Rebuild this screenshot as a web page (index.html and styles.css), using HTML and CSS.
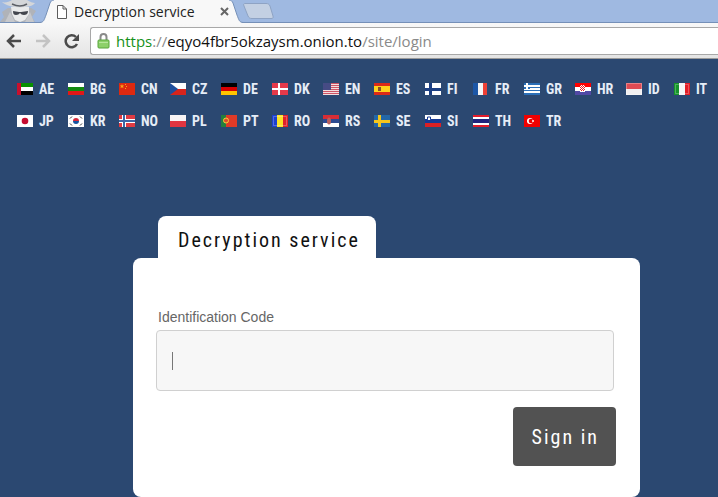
FILE: index.html
```html
<!DOCTYPE html>
<html lang="en">
<head>
    <meta charset="UTF-8">
    <meta name="viewport" content="width=device-width, initial-scale=1.0">
    <title>Decryption service</title>
    <link rel="stylesheet" href="styles.css">
</head>
<body>
    <header class="browser">
        <div class="tabstrip">
            <svg class="incognito" width="40" height="22" viewBox="0 0 40 22" aria-hidden="true">
                <path d="M0 22 L4 17 L2 12 L8 8 H31 L36 11 L32 17 L35 22 Z" fill="#b0b3b9"/>
                <path d="M5 22 L10 12 L15 22 Z M34 22 L30 12 L25 22 Z" fill="#c6c8cc"/>
                <path d="M11 7 H29 V14 L25 20 L20 22 L15 20 L12 14 Z" fill="#e9eaeb"/>
                <path d="M2 2 C5 3 9 2 12 0 H27 C30 2 33 3 35 3 C31 9 9 9 2 2 Z" fill="#d4d6d9"/>
                <path d="M12 4 C16 6 22 7 27 4" fill="none" stroke="#5b5e65" stroke-width="1.500"/>
                <path d="M13 11 L19 12 H21 L28 11 C28 14 26 15 24 15 C22 15 21 14 20 13 C19 14 18 15 16 15 C14 15 13 14 13 11 Z" fill="#43464e"/>
            </svg>
            <div class="tab">
                <svg class="tab-edge" width="14" height="23" viewBox="0 0 14 23" aria-hidden="true">
                    <path d="M0 23 C4 22 4 20 6 15 L10 3 C11 1 12 0 14 0 V23 Z" fill="#f8f8f8"/>
                    <path d="M0 22.500 C4 22 4 20 6 15 L10 3 C11 1 12 0 14 0" fill="none" stroke="#7590b8"/>
                </svg>
                <div class="tab-body">
                    <svg width="12" height="16" viewBox="0 0 12 16" aria-hidden="true">
                        <path d="M1.500 1.500 H7 L10.500 5 V14.500 H1.500 Z M7 1.500 V5 H10.500" fill="#fff" stroke="#5c5c5c"/>
                    </svg>
                    <span class="tab-title">Decryption service</span>
                    <button class="tab-close" type="button" aria-label="Close tab">
                        <svg width="9" height="9" viewBox="0 0 9 9"><path d="M1 1 L8 8 M8 1 L1 8" stroke="#666" stroke-width="2"/></svg>
                    </button>
                </div>
                <svg class="tab-edge" width="14" height="23" viewBox="0 0 14 23" aria-hidden="true">
                    <path d="M0 0 C2 0 3 1 4 3 L8 15 C10 20 10 22 14 23 H0 Z" fill="#f8f8f8"/>
                    <path d="M0 0 C2 0 3 1 4 3 L8 15 C10 20 10 22 14 22.500" fill="none" stroke="#7590b8"/>
                </svg>
            </div>
            <button class="new-tab" type="button" aria-label="New tab">
                <svg width="31" height="16" viewBox="0 0 31 16"><path d="M2 .5 H23 C25 .5 26 1 27 3 L30 13 C30.500 15 30 15.500 28 15.500 H9 C7 15.500 6 15 5 13 L1 3 C0 1 1 .5 2 .5 Z" fill="#c3d0e3" stroke="#8ea3c4"/></svg>
            </button>
        </div>
        <div class="toolbar">
            <div class="nav">
                <button type="button" aria-label="Back">
                    <svg width="16" height="14" viewBox="0 0 16 14"><path d="M8 1 L2 7 L8 13 M2 7 H15" fill="none" stroke="#4b4b4b" stroke-width="2.500"/></svg>
                </button>
                <button type="button" aria-label="Forward">
                    <svg width="16" height="14" viewBox="0 0 16 14"><path d="M8 1 L14 7 L8 13 M14 7 H1" fill="none" stroke="#c3c3c3" stroke-width="2.500"/></svg>
                </button>
                <button type="button" aria-label="Reload">
                    <svg width="16" height="16" viewBox="0 0 16 16"><path d="M13 11 A6 6 0 1 1 12 4" fill="none" stroke="#4b4b4b" stroke-width="2.500"/><path d="M15 1 V8 H8 Z" fill="#4b4b4b"/></svg>
                </button>
            </div>
            <div class="omnibox">
                <svg width="13" height="16" viewBox="0 0 13 16" aria-hidden="true">
                    <path d="M3.500 8 V4 C3.500 0 9.500 0 9.500 4 V8" fill="none" stroke="#8a8a8a" stroke-width="2"/>
                    <rect x="1" y="7" width="11" height="8" rx="1" fill="#8dd06a" stroke="#58a63c"/>
                    <path d="M2 9.500 H11" stroke="#b6e69c"/>
                </svg>
                <div class="url"><span class="url-scheme">https</span><span class="url-dim">://</span>eqyo4fbr5okzaysm.onion.to<span class="url-dim">/site/login</span></div>
            </div>
        </div>
    </header>

    <nav class="languages" aria-label="Language">
        <a href="#"><svg class="flag" viewBox="0 0 16 12"><path fill="#fff" d="M0 0h16v12H0z"/><path fill="#089000" d="M0 0h16v4H0z"/><path fill="#000" d="M0 8h16v4H0z"/><path fill="#c8102e" d="M0 0h4v12H0z"/></svg>AE</a>
        <a href="#"><svg class="flag" viewBox="0 0 16 12"><path fill="#fff" d="M0 0h16v4H0z"/><path fill="#138a10" d="M0 4h16v4H0z"/><path fill="#e01818" d="M0 8h16v4H0z"/></svg>BG</a>
        <a href="#"><svg class="flag" viewBox="0 0 16 12"><path fill="#de2910" d="M0 0h16v12H0z"/><path fill="#f9a51a" d="M3 1l.6 1.500h1.600L4 3.500l.5 1.700L3 4.200 1.500 5.200 2 3.500.8 2.500h1.600zM6 1h1v1H6zM7 3h1v1H7zM6 5h1v1H6z"/></svg>CN</a>
        <a href="#"><svg class="flag" viewBox="0 0 16 12"><path fill="#fff" d="M0 0h16v6H0z"/><path fill="#d7241c" d="M0 6h16v6H0z"/><path fill="#1f4f9d" d="M0 0l8 6-8 6z"/></svg>CZ</a>
        <a href="#"><svg class="flag" viewBox="0 0 16 12"><path fill="#000" d="M0 0h16v4H0z"/><path fill="#d80000" d="M0 4h16v4H0z"/><path fill="#ffc400" d="M0 8h16v4H0z"/></svg>DE</a>
        <a href="#"><svg class="flag" viewBox="0 0 16 12"><path fill="#e5394a" d="M0 0h16v12H0z"/><path fill="#fff" d="M6 0h2v12H6zM0 5h16v2H0z"/></svg>DK</a>
        <a href="#"><svg class="flag" viewBox="0 0 16 12"><path fill="#f3dede" d="M0 0h16v12H0z"/><path fill="#cf5566" d="M0 0h16v1H0zM0 2h16v1H0zM0 4h16v1H0zM0 6h16v1H0zM0 8h16v1H0zM0 10h16v1H0z"/><path fill="#464b84" d="M0 0h8v7H0z"/></svg>EN</a>
        <a href="#"><svg class="flag" viewBox="0 0 16 12"><path fill="#dc2a18" d="M0 0h16v12H0z"/><path fill="#ffd21c" d="M0 3h16v6H0z"/><path fill="#86502a" d="M4 4h3v4H4z"/></svg>ES</a>
        <a href="#" class="short"><svg class="flag" viewBox="0 0 16 12"><path fill="#fff" d="M0 0h16v12H0z"/><path fill="#1c3f83" d="M4 0h3v12H4zM0 5h16v3H0z"/></svg>FI</a>
        <a href="#"><svg class="flag" viewBox="0 0 16 12"><path fill="#f5f5f5" d="M0 0h16v12H0z"/><path fill="#1d57a7" d="M0 0h5v12H0z"/><path fill="#ee4035" d="M10 0h4v12h-4z"/><path fill="#2c4a73" d="M14 0h2v12h-2z"/></svg>FR</a>
        <a href="#"><svg class="flag" viewBox="0 0 16 12"><path fill="#fff" d="M0 0h16v12H0z"/><path fill="#2b6fb8" d="M0 0h16v2H0zM0 4h16v1H0zM0 7h16v1H0zM0 10h16v2H0zM0 0h6v6H0z"/><path fill="#fff" d="M2 0h2v6H2zM0 2h6v2H0z"/></svg>GR</a>
        <a href="#"><svg class="flag" viewBox="0 0 16 12"><path fill="#fff" d="M0 0h16v12H0z"/><path fill="#f00" d="M0 0h16v4H0z"/><path fill="#5149a5" d="M0 8h16v4H0z"/><path fill="#fff" d="M5 2h5v7H5z"/><path fill="#e22" d="M5 2h1v1H5zM7 2h1v1H7zM9 2h1v1H9zM6 3h1v1H6zM8 3h1v1H8zM5 4h1v1H5zM7 4h1v1H7zM9 4h1v1H9zM6 5h1v1H6zM8 5h1v1H8zM5 6h1v1H5zM7 6h1v1H7zM9 6h1v1H9zM6 7h1v1H6zM8 7h1v1H8z"/></svg>HR</a>
        <a href="#" class="short"><svg class="flag" viewBox="0 0 16 12"><path fill="#f1eff0" d="M0 0h16v12H0z"/><path fill="#df4b53" d="M0 0h16v6H0z"/><path fill="none" stroke="#fff" stroke-opacity=".3" d="M.5.5h15v11H.5z"/></svg>ID</a>
        <a href="#"><svg class="flag" viewBox="0 0 16 12"><path fill="#f5f5f5" d="M0 0h16v12H0z"/><path fill="#159429" d="M0 0h5v12H0z"/><path fill="#e21c25" d="M11 0h5v12h-5z"/><path fill="none" stroke="#fff" stroke-opacity=".25" d="M1.500 1.500h13v9h-13z"/></svg>IT</a>
        <a href="#"><svg class="flag" viewBox="0 0 16 12"><path fill="#fff" d="M0 0h16v12H0z"/><circle cx="8" cy="6" r="3.300" fill="#c60c30"/></svg>JP</a>
        <a href="#"><svg class="flag" viewBox="0 0 16 12"><path fill="#fff" d="M0 0h16v12H0z"/><path fill="#d6293b" d="M5 6a3 3 0 0 1 6 0z"/><path fill="#1554a1" d="M5 6a3 3 0 0 0 6 0z"/><path stroke="#333" d="M2 3.500l2-2M12 1.500l2 2M2 8.500l2 2M12 10.500l2-2"/></svg>KR</a>
        <a href="#"><svg class="flag" viewBox="0 0 16 12"><path fill="#df3b43" d="M0 0h16v12H0z"/><path fill="#fff" d="M3 0h4v12H3zM0 4h16v4H0z"/><path fill="#3c66a5" d="M4 0h2v12H4zM0 5h16v2H0z"/></svg>NO</a>
        <a href="#"><svg class="flag" viewBox="0 0 16 12"><path fill="#f8f4f4" d="M0 0h16v6H0z"/><path fill="#e13540" d="M0 6h16v6H0z"/></svg>PL</a>
        <a href="#"><svg class="flag" viewBox="0 0 16 12"><path fill="#e03a27" d="M0 0h16v12H0z"/><path fill="#257f3e" d="M0 0h5v12H0z"/><circle cx="5" cy="5.500" r="2.500" fill="#dc4b2c" stroke="#f4d335"/></svg>PT</a>
        <a href="#"><svg class="flag" viewBox="0 0 16 12"><path fill="#fbe328" d="M0 0h16v12H0z"/><path fill="#1d3fd0" d="M0 0h5v12H0z"/><path fill="#e02128" d="M11 0h5v12h-5z"/><path fill="none" stroke="#fff" stroke-opacity=".25" d="M1.500 1.500h13v9h-13z"/></svg>RO</a>
        <a href="#"><svg class="flag" viewBox="0 0 16 12"><path fill="#d82d35" d="M0 0h16v4H0z"/><path fill="#2d4b91" d="M0 4h16v4H0z"/><path fill="#fff" d="M0 8h16v4H0z"/><ellipse cx="6" cy="6" rx="2" ry="3.500" fill="#b9605c"/></svg>RS</a>
        <a href="#"><svg class="flag" viewBox="0 0 16 12"><path fill="#2367a8" d="M0 0h16v12H0z"/><path fill="#f6c61b" d="M4 0h3v12H4zM0 5h16v3H0z"/></svg>SE</a>
        <a href="#" class="short"><svg class="flag" viewBox="0 0 16 12"><path fill="#fff" d="M0 0h16v4H0z"/><path fill="#173a94" d="M0 4h16v4H0z"/><path fill="#dc2023" d="M0 8h16v4H0z"/><path fill="#fff" stroke="#173a94" d="M2.500 2h3v2.500L4 6 2.500 4.500z"/></svg>SI</a>
        <a href="#"><svg class="flag" viewBox="0 0 16 12"><path fill="#fff" d="M0 0h16v12H0z"/><path fill="#e21c2a" d="M0 0h16v2H0zM0 10h16v2H0z"/><path fill="#20247c" d="M0 4h16v4H0z"/></svg>TH</a>
        <a href="#"><svg class="flag" viewBox="0 0 16 12"><path fill="#f00000" d="M0 0h16v12H0z"/><circle cx="6" cy="6" r="3" fill="#fff"/><circle cx="7" cy="6" r="2.300" fill="#f00000"/><path fill="#fff" d="M8 5.300h2v1.400H8z"/></svg>TR</a>
    </nav>

    <main class="service">
        <h1 class="service-title">Decryption service</h1>
        <form class="card" onsubmit="return false">
            <label for="code">Identification Code</label>
            <div class="field">
                <input type="text" id="code" autocomplete="off">
            </div>
            <button class="sign-in" type="submit">Sign in</button>
        </form>
    </main>
</body>
</html>
```
FILE: styles.css
```css
:root {
    --page: #2b4871;
    --strip: #9fb9e1;
    --narrow: "Agency FB", "Roboto Condensed", Roboto, sans-serif;
}

* {
    box-sizing: border-box;
}

body {
    margin: 0;
    background-color: var(--page);
    font-family: "Liberation Sans", Arial, sans-serif;
}

svg {
    display: block;
    flex: none;
}

button {
    padding: 0;
    border: none;
    background: none;
    cursor: pointer;
}

/* Browser bar */
.browser {
    font-family: "Open Sans", sans-serif;
}

.tabstrip {
    display: flex;
    height: 23px;
    background-color: var(--strip);
    border-bottom: 1px solid #7590b8;
}

.tab {
    display: flex;
    height: 23px;
}

.tab-body {
    display: flex;
    align-items: center;
    gap: 6px;
    width: 175px;
    padding-left: 2px;
    background-color: #f8f8f8;
}

.tab-title {
    font-size: 14px;
    line-height: 20px;
    white-space: nowrap;
    color: #222;
}

.tab-close {
    margin-left: auto;
}

.new-tab {
    align-self: flex-start;
    padding-top: 3px;
}

.toolbar {
    display: flex;
    align-items: center;
    height: 36px;
    padding-left: 6px;
    background: linear-gradient(#f8f8f8, #e4e4e4);
    border-bottom: 1px solid #9a9a9a;
}

.nav {
    display: flex;
    align-items: center;
    gap: 13px;
    width: 84px;
}

.omnibox {
    display: flex;
    flex: 1;
    align-items: center;
    gap: 6px;
    height: 28px;
    padding-left: 6px;
    background-color: #fff;
    border: 1px solid #a8a8a8;
    border-right: none;
    border-radius: 3px 0 0 3px;
}

.url {
    font-size: 15px;
    line-height: 20px;
    white-space: nowrap;
    color: #111;
}

.url-scheme {
    color: #16911a;
}

.url-dim {
    color: #8a8a8a;
}

/* Language list */
.languages {
    display: flex;
    flex-wrap: wrap;
    gap: 12px 16px;
    padding: 20px 0 0 17px;
}

.languages a {
    display: flex;
    align-items: center;
    gap: 6px;
    width: 35px;
    height: 20px;
    font-family: var(--narrow);
    font-size: 14px;
    font-weight: bold;
    color: #e6edf7;
    text-decoration: none;
}

.languages .short {
    width: 32px;
}

.flag {
    width: 16px;
    height: 12px;
}

/* Login card */
.service {
    margin: 85px 78px 0 133px;
}

.service-title {
    width: fit-content;
    margin: 0 0 0 25px;
    padding: 12px 16px 6px 20px;
    background-color: #fff;
    border-radius: 8px 8px 0 0;
    font-family: var(--narrow);
    font-size: 20px;
    font-weight: normal;
    line-height: 24px;
    letter-spacing: 2px;
    color: #111;
}

.card {
    display: flex;
    flex-direction: column;
    padding: 50px 24px 31px 23px;
    background-color: #fff;
    border-radius: 8px;
}

.card label {
    padding-left: 2px;
    font-size: 14px;
    line-height: 18px;
    color: #666;
}

.field {
    position: relative;
    margin: 4px 2px 16px 0;
}

.field input {
    display: block;
    width: 100%;
    height: 61px;
    padding: 0 15px;
    background-color: #f7f7f7;
    border: 1px solid #d0d0d0;
    border-radius: 4px;
    font-size: 16px;
    outline: none;
}

/* text cursor */
.field::after {
    content: "";
    position: absolute;
    top: 22px;
    left: 16px;
    width: 1px;
    height: 18px;
    background-color: #777;
}

.sign-in {
    align-self: flex-end;
    height: 59px;
    padding: 0 17px 0 19px;
    background-color: #525252;
    border-radius: 4px;
    font-family: var(--narrow);
    font-size: 20px;
    letter-spacing: 2px;
    color: #fff;
}
```
